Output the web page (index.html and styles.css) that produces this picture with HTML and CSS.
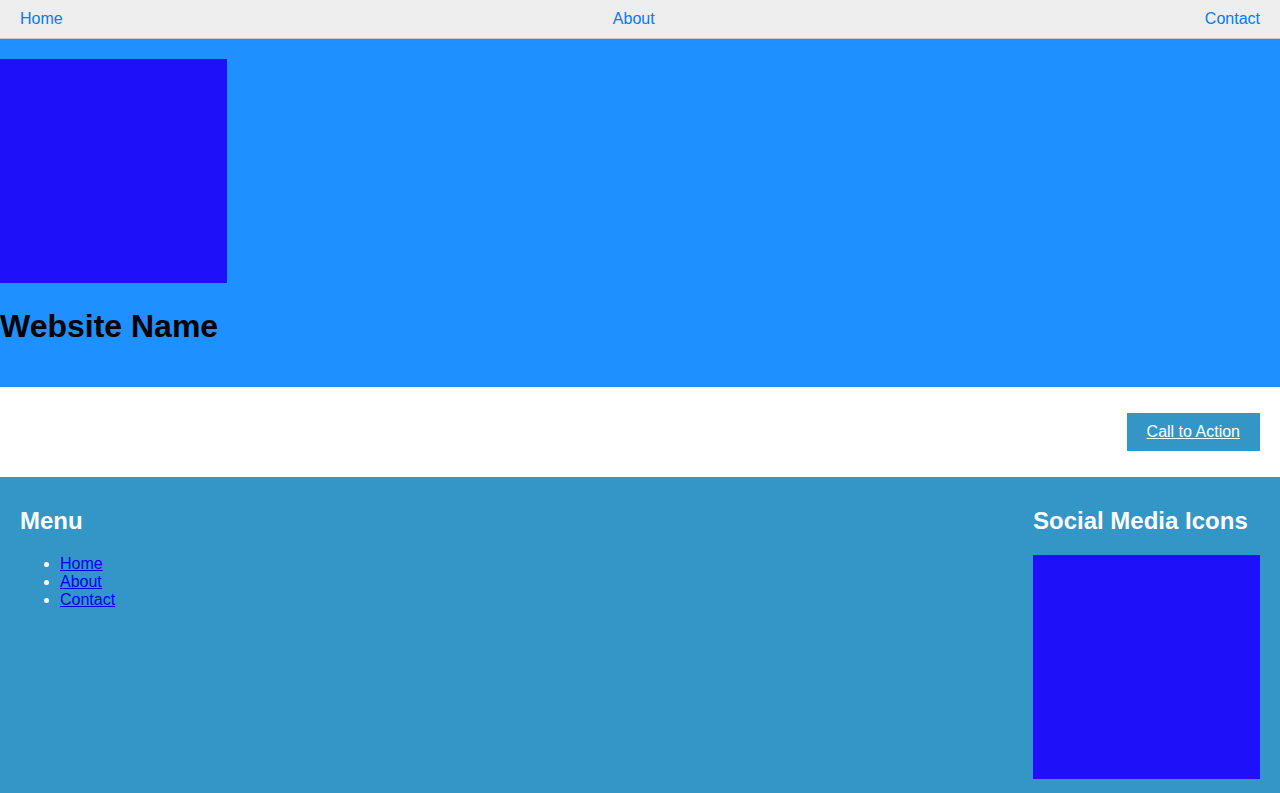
FILE: index.html
```html
<!DOCTYPE html>
<html>
<head>
<meta charset="utf-8">
<link rel="stylesheet" href="styles.css">
</head>
<body>
<nav class="topnav">
  <a href="#">Home</a>
  <a href="#">About</a>
  <a href="#">Contact</a>
</nav>
<header class="hero">
  <div class="logo"></div>
  <h1 class="site-name">Website Name</h1>
</header>
<section class="cta">
  <a class="cta-button" href="#">Call to Action</a>
</section>
<footer class="footer">
  <div class="footer-col">
    <h2 class="footer-title">Menu</h2>
    <ul class="footer-menu">
      <li><a href="#">Home</a></li>
      <li><a href="#">About</a></li>
      <li><a href="#">Contact</a></li>
    </ul>
  </div>
  <div class="footer-col">
    <h2 class="footer-title">Social Media Icons</h2>
    <div class="social-box"></div>
  </div>
</footer>
</body>
</html>
```

FILE: styles.css
```css
html, body {
  margin: 0;
  padding: 0;
  font-family: "Liberation Sans", Arial, sans-serif;
  font-size: 16px;
}

.topnav {
  display: flex;
  justify-content: space-between;
  background: #eeeeee;
  padding: 10px 20px;
  line-height: 18px;
  border-bottom: 1px solid #c8c8c8;
}

.topnav a {
  color: #007bff;
  text-decoration: none;
}

.hero {
  background: #1e90ff;
  padding: 20px 0;
}

.logo {
  display: inline-block;
  width: 227px;
  height: 224px;
  background: #1f10fa;
}

.site-name {
  font-size: 32px;
  font-weight: bold;
  margin: 21.44px 0;
  color: #000;
}

.cta {
  background: #fff;
  padding: 26px 20px;
  text-align: right;
  line-height: 18px;
}

.cta-button {
  display: inline-block;
  background: #3396c6;
  color: #fff;
  padding: 10px 20px;
  text-decoration: underline;
}

.footer {
  display: flex;
  justify-content: space-between;
  background: #3396c6;
  color: #fff;
  padding: 10px 20px 20px;
}

.footer-title {
  font-size: 24px;
  font-weight: bold;
  margin: 19.92px 0;
}

.footer-menu {
  margin: 16px 0;
  padding-left: 40px;
  line-height: 18px;
}

.footer-menu a {
  color: #0000ee;
}

.social-box {
  width: 227px;
  height: 224px;
  background: #1f10fa;
}
```
